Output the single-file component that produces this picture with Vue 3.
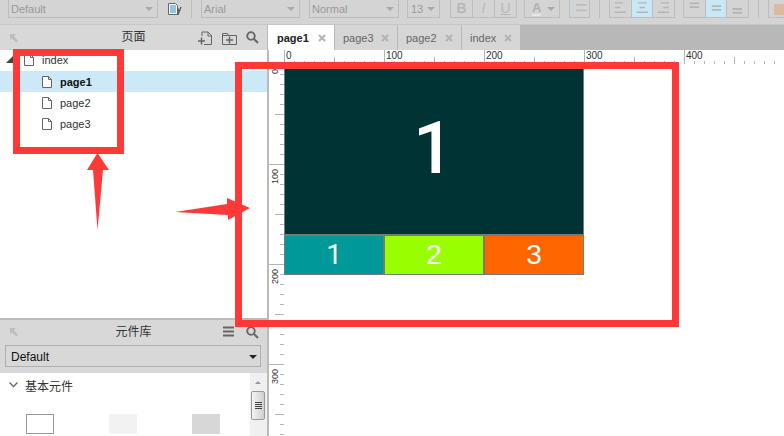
<script setup>
const tabs = [
  { name: 'page1', active: true, w: 66 },
  { name: 'page3', w: 62 },
  { name: 'page2', w: 63 },
  { name: 'index', w: 58 },
]
const pages = ['page1', 'page2', 'page3']
const topTicks = Array.from({ length: 50 }, (_, i) => i)
const sideTicks = Array.from({ length: 38 }, (_, i) => i)
const tickKind = (i) => (i % 10 === 0 ? 'major' : i % 5 === 0 ? 'mid' : 'minor')
const cells = [
  { label: '1', color: '#009999', one: true },
  { label: '2', color: '#99ff00' },
  { label: '3', color: '#ff6600' },
]
</script>

<template>
  <div class="app">
    <header class="toolbar">
      <div class="sel w150"><span>Default</span><i class="caret"></i></div>
      <svg class="style-icon" width="14" height="12" viewBox="0 0 14 12">
        <path d="M.5.500h7l2 2v9h-9z" fill="#f4f4f4" stroke="#666"/>
        <path d="M2 3h6M2 5h6M2 7h6M2 9h6" stroke="#2d97d6"/>
        <path d="M9.500 5l1.500 4 2-5M11 9l-1 3" stroke="#555" stroke-width="1.300" fill="none"/>
      </svg>
      <div class="sep s1"></div>
      <div class="sel w99"><span>Arial</span><i class="caret"></i></div>
      <div class="sel w90"><span>Normal</span><i class="caret"></i></div>
      <div class="sel w33"><span>13</span><i class="caret"></i></div>
      <div class="group g-biu">
        <b class="btn">B</b><em class="btn">I</em><u class="btn">U</u>
      </div>
      <div class="sel w36 color"><span class="a-mark">A</span><i class="caret"></i></div>
      <div class="group g-list">
        <svg class="btn" viewBox="0 0 21 18"><path d="M3 5h2M3 11h2" stroke="#a9d8ee" stroke-width="2"/><path d="M7 5h11M7 11h11" stroke="#bcbcbc" stroke-width="2"/></svg>
      </div>
      <div class="sep s2"></div>
      <div class="group g-align">
        <svg class="btn" viewBox="0 0 22 18"><path d="M5 3h9M5 8h6M5 13h12" stroke="#b5b5b5" stroke-width="1.500"/></svg>
        <svg class="btn on" viewBox="0 0 22 18"><path d="M6 3h10M8 8h6M5 13h12" stroke="#b5b5b5" stroke-width="1.500"/></svg>
        <svg class="btn" viewBox="0 0 22 18"><path d="M8 3h9M11 8h6M5 13h12" stroke="#b5b5b5" stroke-width="1.500"/></svg>
      </div>
      <div class="group g-valign">
        <svg class="btn" viewBox="0 0 22 18"><path d="M6 3.500h10M6 7.500h10" stroke="#b5b5b5" stroke-width="2"/></svg>
        <svg class="btn on" viewBox="0 0 22 18"><path d="M6 6.500h10M6 10.500h10" stroke="#b5b5b5" stroke-width="2"/></svg>
        <svg class="btn" viewBox="0 0 22 18"><path d="M6 9.500h10M6 13.500h10" stroke="#b5b5b5" stroke-width="2"/></svg>
      </div>
      <div class="sep s3"></div>
      <div class="group g-fill"><div class="swatch"></div></div>
    </header>

    <div class="body">
      <aside class="side">
        <section class="pages">
          <div class="panel-head">
            <svg class="pin" width="10" height="10" viewBox="0 0 10 10"><path d="M1 1h6L5 3l4 5-1.500 1.500-5-4L1 7z" fill="#bdbdbd"/></svg>
            <span class="panel-title">页面</span>
            <svg class="hicon new-page" width="15" height="15" viewBox="0 0 15 15"><path d="M4 5V1h6l3.500 3.500V13.500H6" fill="none" stroke="#666"/><path d="M10 1v4h3.500" fill="none" stroke="#666"/><path d="M0 10h7M3.500 6.500v7" stroke="#666" stroke-width="1.500"/></svg>
            <svg class="hicon new-folder" width="15" height="13" viewBox="0 0 15 13"><path d="M.5 12.500v-11h5l1 2h8v9z" fill="none" stroke="#666"/><path d="M.5 3.500h6" stroke="#666"/><path d="M4 8h7M7.500 4.500v7" stroke="#666" stroke-width="1.500"/></svg>
            <svg class="hicon search" width="13" height="13" viewBox="0 0 13 13"><circle cx="5" cy="5" r="3.800" fill="none" stroke="#666" stroke-width="1.800"/><path d="M8 8l4 4" stroke="#666" stroke-width="2.200"/></svg>
          </div>
          <div class="tree">
            <div class="row root">
              <i class="tri"></i>
              <svg class="doc" width="10" height="12" viewBox="0 0 10 12"><path d="M.5.500h6l3 3v8h-9z" fill="#fff" stroke="#666"/><path d="M6.500.500v3h3" fill="none" stroke="#666"/></svg>
              <span>index</span>
            </div>
            <div v-for="(p, i) in pages" :key="p" class="row child" :class="{ current: i === 0 }">
              <svg class="doc" width="10" height="12" viewBox="0 0 10 12"><path d="M.5.500h6l3 3v8h-9z" fill="#fff" stroke="#666"/><path d="M6.500.500v3h3" fill="none" stroke="#666"/></svg>
              <span>{{ p }}</span>
            </div>
          </div>
        </section>

        <section class="library">
          <div class="panel-head lib-head">
            <svg class="pin" width="10" height="10" viewBox="0 0 10 10"><path d="M1 1h6L5 3l4 5-1.500 1.500-5-4L1 7z" fill="#bdbdbd"/></svg>
            <span class="panel-title">元件库</span>
            <svg class="hicon menu" width="11" height="11" viewBox="0 0 11 11"><path d="M0 1.500h11M0 5.500h11M0 9.500h11" stroke="#666" stroke-width="2"/></svg>
            <svg class="hicon search" width="13" height="13" viewBox="0 0 13 13"><circle cx="5" cy="5" r="3.800" fill="none" stroke="#666" stroke-width="1.800"/><path d="M8 8l4 4" stroke="#666" stroke-width="2.200"/></svg>
          </div>
          <div class="lib-select-wrap">
            <div class="lib-select"><span>Default</span><i class="caret dark"></i></div>
          </div>
          <div class="lib-body">
            <div class="lib-content">
              <div class="lib-title">
                <svg width="9" height="6" viewBox="0 0 9 6"><path d="M.5.500l4 4 4-4" fill="none" stroke="#666" stroke-width="1.300"/></svg>
                <span>基本元件</span>
              </div>
              <div class="widgets">
                <div class="widget w-box"></div>
                <div class="widget w-light"></div>
                <div class="widget w-dark"></div>
              </div>
            </div>
            <div class="scrollbar">
              <i class="up"></i>
              <div class="thumb"><i></i><i></i><i></i><i></i></div>
            </div>
          </div>
        </section>
      </aside>

      <main class="main">
        <nav class="tabs">
          <div v-for="t in tabs" :key="t.name" class="tab" :class="{ active: t.active }" :style="{ width: t.w + 'px' }">
            <span>{{ t.name }}</span>
            <svg width="8" height="8" viewBox="0 0 8 8"><path d="M1 1l6 6M7 1L1 7" stroke="#b4b4b4" stroke-width="2"/></svg>
          </div>
        </nav>
        <div class="ruler-top">
          <div v-for="i in topTicks" :key="i" class="ttick" :class="tickKind(i)">
            <span v-if="i % 10 === 0">{{ i * 10 }}</span>
          </div>
        </div>
        <div class="work">
          <div class="ruler-side">
            <div v-for="i in sideTicks" :key="i" class="stick" :class="tickKind(i)">
              <span v-if="i % 10 === 0">{{ i * 10 }}</span>
            </div>
          </div>
          <div class="canvas">
            <div class="hero">1</div>
            <div class="cells">
              <div v-for="c in cells" :key="c.label" class="cell" :class="{ one: c.one }" :style="{ background: c.color }">{{ c.label }}</div>
            </div>
          </div>
        </div>
      </main>
    </div>

    <div class="mark mark-pages"></div>
    <div class="mark mark-canvas"></div>
    <svg class="arrows" width="784" height="436" viewBox="0 0 784 436">
      <polygon points="97.500,153 109,170 103,170 97.500,230 93,170 87,170" fill="#ff3838"/>
      <polygon points="175,212 227,204 227,198 250,208 228,220 228,215" fill="#ff3838"/>
    </svg>
  </div>
</template>

<style>
html, body { margin: 0; padding: 0; background: #fff; }
</style>

<style scoped>
.app {
  position: relative;
  width: 784px;
  height: 436px;
  overflow: hidden;
  display: flex;
  flex-direction: column;
  font-family: "Liberation Sans", Arial, "Noto Sans CJK SC", sans-serif;
  font-size: 12px;
  color: #333;
  background: #fff;
}
.toolbar {
  height: 25px;
  flex: none;
  box-sizing: border-box;
  background: #d4d4d4;
  display: flex;
  align-items: flex-start;
  padding-left: 8px;
  color: #9a9a9a;
  border-bottom: 1px solid #c6c6c6;
  overflow: hidden;
}
.sel {
  box-sizing: border-box;
  height: 18px;
  border: 1px solid #bdbdbd;
  border-top: 0;
  display: flex;
  align-items: center;
  justify-content: space-between;
  padding: 0 4px 0 2px;
  font-size: 11px;
  flex: none;
}
.w150 { width: 150px; }
.w99 { width: 99px; margin-right: 9px; }
.w90 { width: 90px; margin-right: 8px; }
.w33 { width: 33px; margin-right: 10px; padding-left: 3px; }
.w36 { width: 36px; margin-right: 9px; padding-left: 7px; }
.caret {
  width: 0;
  height: 0;
  border-left: 4px solid transparent;
  border-right: 4px solid transparent;
  border-top: 4px solid #aaa;
}
.caret.dark { border-top-color: #222; }
.style-icon { margin: 3px 0 0 10px; flex: none; }
.sep { width: 1px; height: 18px; background: #bdbdbd; flex: none; }
.s1 { margin: 0 9px 0 9px; }
.s2 { margin: 0 9px; }
.s3 { margin: 0 9px; }
.group {
  display: flex;
  height: 18px;
  box-sizing: border-box;
  border: 1px solid #bdbdbd;
  border-top: 0;
  flex: none;
}
.g-biu { width: 67px; margin-right: 7px; }
.g-biu .btn {
  flex: 1;
  text-align: center;
  font-size: 14px;
  line-height: 17px;
  color: #b8b8b8;
  border-right: 1px solid #bdbdbd;
}
.g-biu .btn:last-child { border-right: 0; }
.a-mark {
  font-size: 13px;
  font-weight: 700;
  color: #b0b0b0;
  border-bottom: 2px solid #e8e8e8;
  line-height: 13px;
}
.g-list { width: 21px; }
.g-align, .g-valign { width: 66px; }
.g-align { margin-right: 8px; }
.group svg.btn { flex: 1; min-width: 0; height: 17px; border-right: 1px solid #bdbdbd; }
.group svg.btn:last-child { border-right: 0; }
.group svg.on { background: #c9e8f6; }
.g-fill { width: 30px; padding: 4px 0 0 5px; }
.swatch { width: 25px; height: 11px; background: #dcb9a0; }

.body { flex: 1; min-height: 0; display: flex; }
.side {
  width: 269px;
  flex: none;
  box-sizing: border-box;
  border-right: 2px solid #bababa;
  display: flex;
  flex-direction: column;
}
.pages { height: 295px; flex: none; box-sizing: border-box; border-bottom: 2px solid #bababa; }
.panel-head {
  height: 25px;
  position: relative;
  background: #d8d8d8;
  display: flex;
  align-items: center;
}
.pin { margin-left: 9px; flex: none; }
.panel-title {
  position: absolute;
  left: 0;
  right: 0;
  top: 4px;
  text-align: center;
  font-size: 12px;
  line-height: 16px;
  color: #333;
}
.hicon { position: absolute; }
.new-page { left: 198px; top: 6px; }
.new-folder { left: 222px; top: 7px; }
.search { left: 246px; top: 6px; }
.menu { left: 223px; top: 6px; }
.lib-head { height: 24px; }
.tree { margin-top: -1px; }
.row { height: 21px; display: flex; align-items: center; color: #333; font-size: 11px; }
.root { position: relative; padding-left: 24px; gap: 8px; height: 22px; }
.tri {
  position: absolute;
  left: 6px;
  top: 7px;
  width: 0;
  height: 0;
  border-left: 7px solid transparent;
  border-bottom: 7px solid #444;
}
.child { padding-left: 42px; gap: 8px; }
.current { background: #cbe9f7; font-weight: 700; color: #111; }

.library { flex: 1; min-height: 0; display: flex; flex-direction: column; }
.lib-select-wrap { background: #d8d8d8; padding: 1px 6px 6px 5px; }
.lib-select {
  box-sizing: border-box;
  height: 22px;
  border: 1px solid #b0b0b0;
  display: flex;
  align-items: center;
  justify-content: space-between;
  padding: 1px 3px 0 5px;
  color: #111;
  font-size: 12px;
}
.lib-body { flex: 1; min-height: 0; display: flex; }
.lib-content { flex: 1; min-width: 0; }
.lib-title {
  display: flex;
  align-items: center;
  gap: 7px;
  padding: 4px 0 0 9px;
  height: 16px;
  color: #333;
}
.widgets { display: flex; padding: 21px 0 0 26px; gap: 55px; }
.widget { width: 28px; height: 20px; box-sizing: border-box; flex: none; }
.w-box { background: #fff; border: 1px solid #999; }
.w-light { background: #f2f2f2; }
.w-dark { background: #d7d7d7; }
.scrollbar {
  width: 17px;
  flex: none;
  background: #f0f0f0;
  position: relative;
}
.up {
  position: absolute;
  left: 5px;
  top: 8px;
  width: 0;
  height: 0;
  border-left: 3px solid transparent;
  border-right: 3px solid transparent;
  border-bottom: 3px solid #999;
}
.thumb {
  position: absolute;
  left: 1px;
  top: 18px;
  width: 14px;
  height: 29px;
  box-sizing: border-box;
  border: 1px solid #999;
  border-radius: 2px;
  background: linear-gradient(90deg, #f4f4f4, #cfcfcf);
  display: flex;
  flex-direction: column;
  justify-content: center;
  align-items: center;
  gap: 1px;
}
.thumb i { width: 7px; height: 1px; background: #444; }

.main { flex: 1; min-width: 0; display: flex; flex-direction: column; background: #fff; }
.tabs { height: 25px; flex: none; display: flex; background: #b8b8b8; gap: 1px; margin-left: -1px; position: relative; }
.tab {
  box-sizing: border-box;
  height: 25px;
  background: #d6d6d6;
  color: #666;
  display: flex;
  align-items: center;
  justify-content: space-between;
  padding: 0 8px;
  font-size: 11px;
  flex: none;
}
.tab.active { background: #fff; color: #222; font-weight: 700; padding-left: 9px; }
.ruler-top { height: 14px; flex: none; display: flex; padding-left: 15px; overflow: hidden; }
.ttick { width: 10px; height: 14px; flex: none; box-sizing: border-box; position: relative; }
.ttick::before {
  content: "";
  position: absolute;
  left: 0;
  bottom: 0;
  width: 1px;
  background: #b5b5b5;
}
.ttick.minor::before { height: 3px; }
.ttick.mid::before { height: 7px; }
.ttick.major::before { height: 14px; }
.ttick span { position: absolute; left: 2px; top: 0; font-size: 10px; line-height: 12px; color: #333; z-index: 1; }
.work { flex: 1; min-height: 0; display: flex; }
.ruler-side { width: 15px; flex: none; overflow: hidden; }
.stick { height: 10px; position: relative; }
.stick::before {
  content: "";
  position: absolute;
  right: 0;
  top: 0;
  height: 1px;
  background: #b5b5b5;
}
.stick.minor::before { width: 4px; }
.stick.mid::before { width: 9px; }
.stick.major::before { width: 15px; }
.stick span {
  position: absolute;
  left: 1px;
  top: 5px;
  font-size: 9px;
  line-height: 10px;
  color: #333;
  writing-mode: vertical-rl;
  transform: rotate(180deg);
  z-index: 1;
}
.canvas { width: 300px; flex: none; padding-top: 1px; }
.hero {
  box-sizing: border-box;
  height: 170px;
  background: #003333;
  border: 1px solid #797979;
  color: #fff;
  font-family: Roboto, "Liberation Sans", sans-serif;
  font-weight: 500;
  font-size: 72px;
  line-height: 166px;
  padding-right: 1px;
  text-align: center;
}
.cells { display: flex; }
.cell {
  box-sizing: border-box;
  width: 100px;
  height: 40px;
  border: 1px solid #797979;
  color: #fff;
  font-size: 28px;
  line-height: 38px;
  text-align: center;
}
.cell.one { font-family: Roboto, "Liberation Sans", sans-serif; }
.mark { position: absolute; box-sizing: border-box; border: 7px solid #ff3838; }
.mark-pages { left: 13px; top: 49px; width: 111px; height: 105px; }
.mark-canvas { left: 235px; top: 62px; width: 444px; height: 265px; }
.arrows { position: absolute; left: 0; top: 0; pointer-events: none; }
</style>
